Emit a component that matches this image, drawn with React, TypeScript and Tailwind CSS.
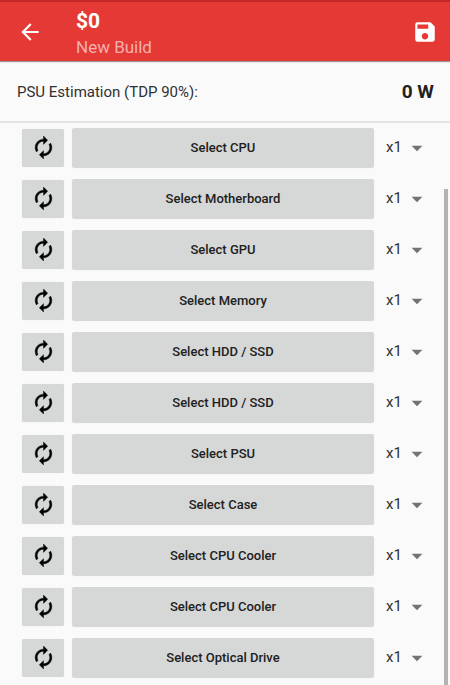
import { useState } from "react";
import { MdArrowBack, MdArrowDropDown, MdSave } from "react-icons/md";

const SLOTS = [
  "CPU",
  "Motherboard",
  "GPU",
  "Memory",
  "HDD / SSD",
  "HDD / SSD",
  "PSU",
  "Case",
  "CPU Cooler",
  "CPU Cooler",
  "Optical Drive",
];

function RenewIcon() {
  return (
    <svg
      viewBox="0 0 24 24"
      className="h-[25px] w-[25px]"
      fill="currentColor"
      stroke="currentColor"
      strokeWidth={0.4}
      aria-hidden="true"
    >
      <path d="M12 6v3l4-4-4-4v3c-4.42 0-8 3.58-8 8 0 1.57.46 3.03 1.24 4.26L6.7 14.8A5.87 5.87 0 0 1 6 12c0-3.31 2.69-6 6-6zm6.76 1.74L17.3 9.2c.44.84.7 1.79.7 2.8 0 3.31-2.69 6-6 6v-3l-4 4 4 4v-3c4.42 0 8-3.58 8-8 0-1.57-.46-3.03-1.24-4.26z" />
    </svg>
  );
}

function PartRow({ part }: { part: string }) {
  const [quantity, setQuantity] = useState("1");

  return (
    <li className="flex items-center">
      <button
        type="button"
        aria-label={`Reset ${part}`}
        onClick={() => setQuantity("1")}
        className="mr-2 flex h-[38px] w-[42px] shrink-0 items-center justify-center rounded-xs bg-[#d6d7d7] text-black shadow-[0_0_1px_rgba(0,0,0,0.15)]"
      >
        <RenewIcon />
      </button>
      <button
        type="button"
        className="h-[39px] min-w-0 flex-1 rounded-xs bg-[#d6d7d7] text-[13px] font-medium text-[#212121] shadow-[0_1px_1px_rgba(0,0,0,0.15)]"
      >
        Select {part}
      </button>
      <div className="relative ml-3 w-10 shrink-0">
        <select
          aria-label={`${part} quantity`}
          value={quantity}
          onChange={(e) => setQuantity(e.target.value)}
          className="block w-full appearance-none bg-transparent text-[15px] text-[#303030]"
        >
          <option value="1">x1</option>
          <option value="2">x2</option>
          <option value="3">x3</option>
          <option value="4">x4</option>
        </select>
        <MdArrowDropDown
          size={26}
          className="pointer-events-none absolute -right-1 top-1/2 -translate-y-1/2 text-[#737373]"
        />
      </div>
    </li>
  );
}

export default function App() {
  return (
    <div className="flex h-screen flex-col overflow-hidden bg-[#fafafa] font-[Roboto,sans-serif] text-[#212121]">
      <header className="z-10 flex shrink-0 items-center border-t-2 border-[#c62828] bg-[#e53935] pr-3 pl-4 text-white shadow-[0_1px_1px_rgba(0,0,0,0.4)]">
        <button type="button" aria-label="Back" className="w-[60px] pl-px">
          <MdArrowBack size={26} />
        </button>
        <div className="min-w-0 flex-1 pt-[7px]">
          <h1 className="text-[21px] leading-6 font-bold">$0</h1>
          <p className="text-[17px] leading-7 text-[#f5b0ae]">New Build</p>
        </div>
        <button type="button" aria-label="Save build">
          <MdSave size={26} />
        </button>
      </header>

      {/* Power estimate */}
      <div className="flex h-[62px] shrink-0 items-center justify-between border-b-2 border-[#e3e3e3] pt-0.5 pr-4 pl-[17px]">
        <span className="text-[15px] text-[#303030]">PSU Estimation (TDP 90%):</span>
        <span className="text-[19px] font-bold">0 W</span>
      </div>

      {/* Part slots */}
      <main className="relative min-h-0 flex-1 overflow-hidden">
        <ul className="flex flex-col gap-3 pt-[5px] pr-6 pb-4 pl-[22px]">
          {SLOTS.map((part, i) => (
            <PartRow key={i} part={part} />
          ))}
        </ul>
        <div className="absolute top-[66px] right-0.5 bottom-0 w-1 bg-[#b3b3b3]" />
      </main>
    </div>
  );
}
